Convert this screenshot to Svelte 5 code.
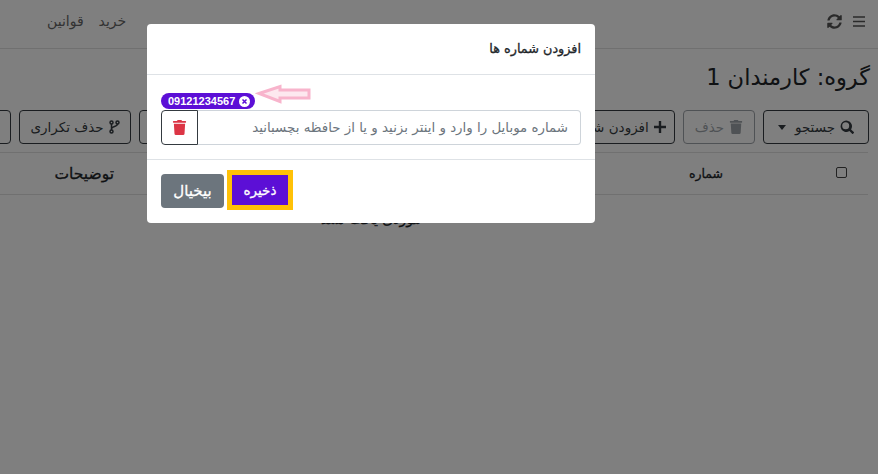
<script>
  let numbers = $state(['09121234567']);
  const buttons = [
    { label: 'جستجو', icon: 'search', caret: true, width: 106 },
    { label: 'حذف', icon: 'trash', muted: true, width: 72 },
    { label: 'افزودن شماره از فایل', icon: 'plus', width: 160 },
    { label: '', icon: 'none', width: 134 },
    { label: '', icon: 'none', width: 110 },
    { label: '', icon: 'none', width: 108 },
    { label: 'حذف تکراری', icon: 'branch', width: 112 },
    { label: '', icon: 'none', width: 70 }
  ];
</script>

{#snippet trash(size)}
  <svg width={size} height={size} viewBox="0 0 448 512" fill="currentColor"><path d="M432 32H312l-9-19A24 24 0 0 0 281 0H167a24 24 0 0 0-21 13l-9 19H16A16 16 0 0 0 0 48v32a16 16 0 0 0 16 16h416a16 16 0 0 0 16-16V48a16 16 0 0 0-16-16zM53 467a48 48 0 0 0 48 45h246a48 48 0 0 0 48-45l21-339H32z"/></svg>
{/snippet}

<div class="page">
  <nav class="navbar">
    <div class="nav-icons">
      <svg width="14" height="13" viewBox="0 0 14 13" fill="none" stroke="currentColor" stroke-width="1.6"><path d="M1 2h12M1 6.500h12M1 11h12"/></svg>
      <svg width="15" height="15" viewBox="0 0 512 512" fill="currentColor"><path d="M370.720 133.280C339.458 104.008 298.888 87.962 255.848 88c-77.458.068-144.328 53.178-162.791 126.850-1.344 5.363-6.122 9.150-11.651 9.150H24.103c-7.498 0-13.194-6.807-11.807-14.176C33.933 94.924 134.813 8 256 8c66.448 0 126.791 26.136 171.315 68.685L463.030 40.970C478.149 25.851 504 36.559 504 57.941V192c0 13.255-10.745 24-24 24H345.941c-21.382 0-32.090-25.851-16.971-40.971l41.750-41.749zM32 296h134.059c21.382 0 32.090 25.851 16.971 40.971l-41.750 41.750c31.262 29.273 71.835 45.319 114.876 45.280 77.418-.07 144.315-53.144 162.787-126.849 1.344-5.363 6.122-9.150 11.651-9.150h57.304c7.498 0 13.194 6.807 11.807 14.176C478.067 417.076 377.187 504 256 504c-66.448 0-126.791-26.136-171.315-68.685L48.970 471.030C33.851 486.149 8 475.441 8 454.059V320c0-13.255 10.745-24 24-24z"/></svg>
    </div>
    <div class="nav-links">
      <span>خرید</span>
      <span>قوانین</span>
    </div>
  </nav>

  <h1>گروه: کارمندان 1</h1>

  <div class="toolbar">
    {#each buttons as b}
      <button class="tool" class:muted={b.muted} style="width:{b.width}px">
        {#if b.icon === 'search'}
          <svg width="14" height="14" viewBox="0 0 512 512" fill="currentColor"><path d="M505 443 405 343a208 208 0 1 0-62 62l100 100a24 24 0 0 0 34 0l28-28a24 24 0 0 0 0-34zM208 336a128 128 0 1 1 0-256 128 128 0 0 1 0 256z"/></svg>
        {:else if b.icon === 'trash'}
          {@render trash(14)}
        {:else if b.icon === 'plus'}
          <svg width="12" height="12" viewBox="0 0 13 13" fill="none" stroke="currentColor" stroke-width="2.600"><path d="M6.500 0v13M0 6.500h13"/></svg>
        {:else if b.icon === 'branch'}
          <svg width="11" height="14" viewBox="0 0 11 14" fill="none" stroke="currentColor" stroke-width="1.500"><circle cx="2.500" cy="2.500" r="1.500"/><circle cx="2.500" cy="11.500" r="1.500"/><circle cx="8.500" cy="2.500" r="1.500"/><path d="M2.500 4v6M8.500 4c0 3-6 2-6 5"/></svg>
        {/if}
        {#if b.label}<span>{b.label}</span>{/if}
        {#if b.caret}<i class="caret"></i>{/if}
      </button>
    {/each}
  </div>

  <div class="thead">
    <div class="check"><i></i></div>
    <div class="col-number">شماره</div>
    <div class="col-notes">توضیحات</div>
  </div>
  <p class="empty">موردی یافت نشد</p>
</div>

<div class="backdrop">
  <div class="modal">
    <header>افزودن شماره ها</header>
    <section>
      <div class="chips">
        {#each numbers as n}
          <span class="chip">
            <span>{n}</span>
            <svg width="11" height="11" viewBox="0 0 11 11"><circle cx="5.500" cy="5.500" r="5.500" fill="#fff"/><path d="M3.500 3.500l4 4M7.500 3.500l-4 4" stroke="#5c0fd6" stroke-width="1.500"/></svg>
          </span>
        {/each}
        <svg class="arrow" width="56" height="22" viewBox="0 0 56 22" fill="#fde8ef" stroke="#f8b4cc" stroke-width="3"><path d="M4 10.500 25 3.500V7H54V15H25v3.500z"/></svg>
      </div>
      <div class="input-row">
        <div class="fake-input">شماره موبایل را وارد و اینتر بزنید و یا از حافظه بچسبانید</div>
        <button class="clear">{@render trash(15)}</button>
      </div>
    </section>
    <footer>
      <button class="save">ذخیره</button>
      <button class="cancel">بیخیال</button>
    </footer>
  </div>
</div>

<style>
  :global(body) {
    margin: 0;
    background: #fff;
    overflow: hidden;
  }

  .page {
    direction: rtl;
    width: 878px;
    height: 474px;
    overflow: hidden;
    font-family: "DejaVu Sans", "Noto Sans", sans-serif;
    color: #212529;
    font-size: 13px;
  }

  .navbar {
    height: 42px;
    display: flex;
    justify-content: space-between;
    align-items: center;
    padding: 0 12px 6px 0;
    border-bottom: 1px solid rgba(0, 0, 0, 0.12);
    color: #666;
  }

  .nav-icons {
    display: flex;
    align-items: center;
    gap: 10px;
    color: #555;
  }

  .nav-links {
    display: flex;
    gap: 15px;
    padding-left: 47px;
    font-size: 14px;
  }

  h1 {
    margin: 13px 8px 0 0;
    font-size: 22.500px;
    font-weight: 400;
    line-height: 30px;
    height: 30px;
    white-space: nowrap;
  }

  .toolbar {
    display: flex;
    gap: 8px;
    margin: 18px 9px 0 0;
    width: 1000px;
  }

  .tool {
    flex: none;
    height: 34px;
    display: flex;
    align-items: center;
    justify-content: center;
    gap: 5px;
    padding: 0;
    background: transparent;
    border: 1px solid #343a40;
    border-radius: 4px;
    color: #343a40;
    font: inherit;
    font-size: 13.500px;
    direction: rtl;
    white-space: nowrap;
    overflow: hidden;
  }

  .tool.muted {
    opacity: 0.65;
    border-color: #6c757d;
    color: #6c757d;
  }

  .caret {
    width: 0;
    height: 0;
    margin-right: 4px;
    border: 4px solid transparent;
    border-top: 5px solid currentColor;
    border-bottom: 0;
  }

  .thead {
    display: flex;
    align-items: center;
    height: 41px;
    margin: 8px 10px 0 0;
    border-top: 1px solid rgba(0, 0, 0, 0.12);
    border-bottom: 1px solid rgba(0, 0, 0, 0.12);
    font-size: 12.500px;
    -webkit-text-stroke: 0.3px currentColor;
  }

  .check {
    width: 54px;
    display: flex;
    justify-content: center;
  }

  .check i {
    width: 9px;
    height: 9px;
    margin-bottom: 3px;
    border: 1px solid #444;
    border-radius: 2px;
  }

  .col-number {
    width: 110px;
    margin-right: 53px;
    text-align: center;
  }

  .col-notes {
    margin-right: 537px;
    font-size: 15.500px;
    white-space: nowrap;
  }

  .empty {
    margin: 14px 136px 0 0;
    text-align: center;
    font-size: 14px;
    line-height: 20px;
    -webkit-text-stroke: 0.3px currentColor;
  }

  .backdrop {
    position: fixed;
    inset: 0;
    background: rgba(0, 0, 0, 0.5);
    padding: 24px 0 0 147px;
    font-family: "DejaVu Sans", "Noto Sans", sans-serif;
  }

  .modal {
    direction: rtl;
    width: 448px;
    height: 199px;
    background: #fff;
    border-radius: 4px;
    color: #212529;
    display: flex;
    flex-direction: column;
  }

  header {
    height: 51px;
    display: flex;
    align-items: center;
    padding: 0 14px 2px;
    box-sizing: border-box;
    border-bottom: 1px solid #dee2e6;
    font-size: 12.800px;
    -webkit-text-stroke: 0.3px currentColor;
  }

  section {
    height: 85px;
    padding: 0 14px;
    box-sizing: border-box;
    border-bottom: 1px solid #dee2e6;
  }

  .chips {
    direction: ltr;
    display: flex;
    align-items: flex-start;
    height: 35px;
    padding-top: 18px;
    box-sizing: border-box;
    position: relative;
  }

  .chip {
    display: inline-flex;
    align-items: center;
    gap: 4px;
    height: 16px;
    padding: 0 5px 0 7px;
    border-radius: 8px;
    background: #5c0fd6;
    color: #fff;
    font-family: "Liberation Sans", sans-serif;
    font-weight: 700;
    font-size: 11px;
  }

  .arrow {
    position: absolute;
    left: 94px;
    top: 8px;
  }

  .input-row {
    display: flex;
    height: 35px;
  }

  .fake-input {
    flex: 1;
    display: flex;
    align-items: center;
    padding: 0 12px;
    border: 1px solid #ced4da;
    border-left: 0;
    border-radius: 0 4px 4px 0;
    color: #6c757d;
    font-size: 13.400px;
    white-space: nowrap;
    overflow: hidden;
  }

  .clear {
    width: 37px;
    padding: 0;
    display: flex;
    align-items: center;
    justify-content: center;
    background: #fff;
    border: 1px solid #343a40;
    border-radius: 4px 0 0 4px;
    color: #dc3545;
  }

  footer {
    flex: 1;
    display: flex;
    align-items: center;
    direction: ltr;
    padding: 0 14px;
    gap: 3px;
  }

  footer button {
    font: inherit;
    font-size: 13.500px;
    color: #fff;
    padding: 0;
    box-sizing: border-box;
    border: 0;
    -webkit-text-stroke: 0.3px currentColor;
  }

  .cancel {
    order: 1;
    width: 63px;
    height: 34px;
    margin-bottom: 1px;
    background: #6c757d;
    border-radius: 4px;
    font-size: 15px;
  }

  .save {
    order: 2;
    width: 66px;
    height: 40px;
    margin-bottom: 3px;
    background: #5c0fd6;
    border: 5px solid #ffc107;
    border-radius: 0;
  }
</style>
